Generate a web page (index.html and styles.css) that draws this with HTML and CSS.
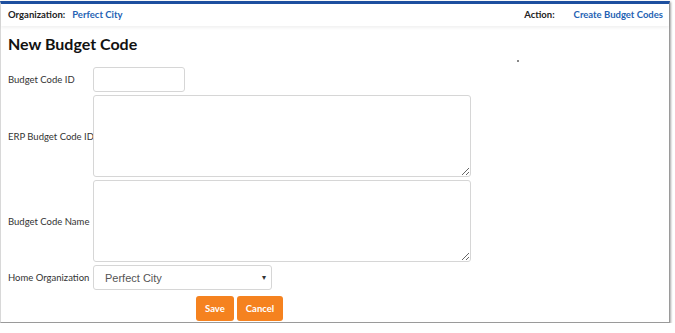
FILE: index.html
```html
<!DOCTYPE html>
<html lang="en">
<head>
    <meta charset="UTF-8">
    <meta name="viewport" content="width=device-width, initial-scale=1.0">
    <title>New Budget Code</title>
    <link rel="stylesheet" href="styles.css">
</head>
<body>

<div class="frame">
    <div class="top-bar">
        <div class="crumb">
            <span class="crumb-label">Organization:</span>
            <a class="crumb-link" href="#">Perfect City</a>
        </div>
        <div class="crumb">
            <span class="crumb-label">Action:</span>
            <a class="crumb-link" href="#">Create Budget Codes</a>
        </div>
    </div>

    <h1 class="page-title">New Budget Code</h1>
    <span class="speck"></span>

    <form class="budget-form">
        <label class="field-label" for="code_id">Budget Code ID</label>
        <div><input type="text" id="code_id" class="text-input"></div>

        <label class="field-label" for="erp_id">ERP Budget Code ID</label>
        <div><textarea id="erp_id" class="text-area"></textarea></div>

        <label class="field-label" for="code_name">Budget Code Name</label>
        <div><textarea id="code_name" class="text-area"></textarea></div>

        <label class="field-label" for="home_org">Home Organization</label>
        <div>
            <div class="select-box">
                <span>Perfect City</span>
                <span class="caret">&#9662;</span>
            </div>
        </div>

        <div class="actions">
            <button type="button" class="btn">Save</button>
            <button type="button" class="btn">Cancel</button>
        </div>
    </form>
</div>

</body>
</html>
```

FILE: styles.css
```css
body {
    margin: 0;
    background-color: #fff;
    font-family: Lato, "Open Sans", Arial, sans-serif;
    color: #222;
}
.frame {
    position: relative;
    margin-top: 1px;
    width: 668px;
    height: 318px;
    border-top: 3px solid #1d4f9f;
    border-left: 1px solid #d8d8d8;
    border-right: 1px solid #9a9a9a;
    border-bottom: 1px solid #9a9a9a;
    box-shadow: 1px 1px 2px rgba(0, 0, 0, 0.35);
    background-color: #fff;
}
.top-bar {
    display: flex;
    justify-content: space-between;
    padding: 4px 6px 0 7px;
    height: 18px;
    box-shadow: 0 2px 3px rgba(0, 0, 0, 0.06);
}
.crumb {
    display: flex;
    gap: 7px;
    font-size: 9.5px;
    font-weight: 700;
    line-height: 14px;
}
.crumb + .crumb {
    gap: 19px;
}
.crumb-label {
    color: #222;
}
.crumb-link {
    color: #2462b4;
    text-decoration: none;
}
.page-title {
    margin: 8px 0 0 7px;
    font-size: 16px;
    font-weight: 700;
    color: #111;
    line-height: 20px;
}
.speck {
    position: absolute;
    left: 516px;
    top: 56px;
    width: 2px;
    height: 2px;
    background-color: #888;
}
.budget-form {
    display: grid;
    grid-template-columns: 85px 1fr;
    row-gap: 3px;
    margin: 13px 0 0 7px;
}
.field-label {
    display: flex;
    align-items: center;
    font-size: 9.5px;
    color: #333;
    white-space: nowrap;
}
.text-input {
    display: block;
    box-sizing: border-box;
    width: 92px;
    height: 25px;
    border: 1px solid #d6d6d6;
    border-radius: 3px;
}
.text-area {
    display: block;
    box-sizing: border-box;
    width: 378px;
    height: 82px;
    border: 1px solid #d6d6d6;
    border-radius: 3px;
    resize: vertical;
}
.select-box {
    display: flex;
    justify-content: space-between;
    align-items: center;
    box-sizing: border-box;
    width: 179px;
    height: 25px;
    padding: 0 5px 0 11px;
    border: 1px solid #d6d6d6;
    border-radius: 3px;
    font-family: "Liberation Sans", Arial, sans-serif;
    font-size: 11px;
    color: #555;
}
.caret {
    font-size: 8px;
    color: #333;
}
.actions {
    grid-column: 2;
    display: flex;
    gap: 3px;
    margin: 3px 0 0 103px;
}
.btn {
    height: 25px;
    padding: 0 9px;
    border: none;
    border-radius: 3px;
    background-color: #f5821f;
    color: #fff;
    font-family: Lato, Arial, sans-serif;
    font-size: 9.5px;
    font-weight: 700;
    cursor: pointer;
}
```
